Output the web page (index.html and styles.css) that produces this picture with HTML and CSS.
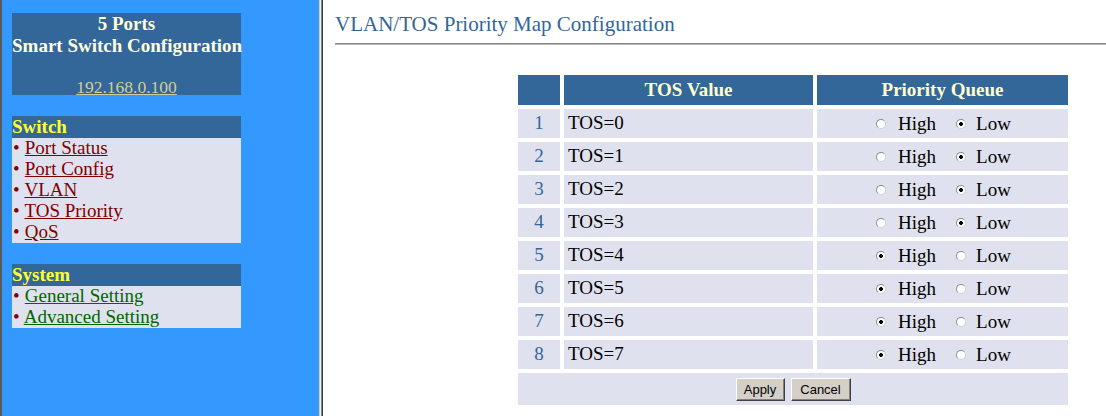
FILE: index.html
```html
<!DOCTYPE html>
<html>
<head>
<meta charset="utf-8">
<title>VLAN/TOS Priority Map Configuration</title>
<link rel="stylesheet" href="styles.css">
</head>
<body>
<div class="page">
  <div class="menu-frame">
    <div class="brand">
      <div class="brand-line">5 Ports</div>
      <div class="brand-line">Smart Switch Configuration</div>
      <div class="brand-ip"><a href="#">192.168.0.100</a></div>
    </div>
    <div class="section">
      <div class="section-title">Switch</div>
      <ul class="section-list red">
        <li><span class="dot">•</span> <a href="#">Port Status</a></li>
        <li><span class="dot">•</span> <a href="#">Port Config</a></li>
        <li><span class="dot">•</span> <a href="#">VLAN</a></li>
        <li><span class="dot">•</span> <a href="#">TOS Priority</a></li>
        <li><span class="dot">•</span> <a href="#">QoS</a></li>
      </ul>
    </div>
    <div class="section">
      <div class="section-title">System</div>
      <ul class="section-list green">
        <li><span class="dot">•</span> <a href="#">General Setting</a></li>
        <li><span class="dot">•</span> <a href="#">Advanced Setting</a></li>
      </ul>
    </div>
  </div>
  <div class="frame-sep"></div>
  <div class="main-frame">
    <h1 class="title">VLAN/TOS Priority Map Configuration</h1>
    <div class="rule"></div>
    <form class="tos-form">
      <table class="tos-table">
        <thead>
          <tr>
            <th class="c-num"></th>
            <th class="c-val">TOS Value</th>
            <th class="c-pri">Priority Queue</th>
          </tr>
        </thead>
        <tbody>
          <tr><td class="num">1</td><td class="val">TOS=0</td><td class="pri"><span class="opts"><input type="radio" name="t0"><span class="lbl-h">High</span><input type="radio" name="t0" checked><span class="lbl-l">Low</span></span></td></tr>
          <tr><td class="num">2</td><td class="val">TOS=1</td><td class="pri"><span class="opts"><input type="radio" name="t1"><span class="lbl-h">High</span><input type="radio" name="t1" checked><span class="lbl-l">Low</span></span></td></tr>
          <tr><td class="num">3</td><td class="val">TOS=2</td><td class="pri"><span class="opts"><input type="radio" name="t2"><span class="lbl-h">High</span><input type="radio" name="t2" checked><span class="lbl-l">Low</span></span></td></tr>
          <tr><td class="num">4</td><td class="val">TOS=3</td><td class="pri"><span class="opts"><input type="radio" name="t3"><span class="lbl-h">High</span><input type="radio" name="t3" checked><span class="lbl-l">Low</span></span></td></tr>
          <tr><td class="num">5</td><td class="val">TOS=4</td><td class="pri"><span class="opts"><input type="radio" name="t4" checked><span class="lbl-h">High</span><input type="radio" name="t4"><span class="lbl-l">Low</span></span></td></tr>
          <tr><td class="num">6</td><td class="val">TOS=5</td><td class="pri"><span class="opts"><input type="radio" name="t5" checked><span class="lbl-h">High</span><input type="radio" name="t5"><span class="lbl-l">Low</span></span></td></tr>
          <tr><td class="num">7</td><td class="val">TOS=6</td><td class="pri"><span class="opts"><input type="radio" name="t6" checked><span class="lbl-h">High</span><input type="radio" name="t6"><span class="lbl-l">Low</span></span></td></tr>
          <tr><td class="num">8</td><td class="val">TOS=7</td><td class="pri"><span class="opts"><input type="radio" name="t7" checked><span class="lbl-h">High</span><input type="radio" name="t7"><span class="lbl-l">Low</span></span></td></tr>
          <tr><td class="actions" colspan="3"><button type="button" class="btn btn-apply">Apply</button><button type="button" class="btn btn-cancel">Cancel</button></td></tr>
        </tbody>
      </table>
    </form>
  </div>
</div>
</body>
</html>
```
FILE: styles.css
```css
html, body {
  margin: 0;
  padding: 0;
  background: #ffffff;
}
body {
  font-family: "Liberation Serif", "Times New Roman", serif;
  font-size: 19px;
  overflow: hidden;
}
.page {
  display: flex;
  height: 416px;
}

/* left frame */
.menu-frame {
  width: 307px;
  flex: none;
  background: #3399ff;
  border-left: 2px solid #5a5a5a;
  padding: 13px 0 0 10px;
  box-sizing: content-box;
}
.brand {
  width: 229px;
  height: 82px;
  box-sizing: border-box;
  background: #336699;
  text-align: center;
  font-weight: bold;
  color: #ffffdd;
}
.brand-line {
  line-height: 21px;
  white-space: nowrap;
}
.brand-line + .brand-line {
  margin-top: 1px;
}
.brand-ip {
  margin-top: 21px;
  line-height: 20px;
  font-weight: normal;
  font-size: 17.5px;
}
.brand-ip a {
  color: #d4cd9b;
  text-decoration: underline;
}
.section {
  width: 229px;
  margin-top: 21px;
}
.section-title {
  background: #336699;
  color: #ffff33;
  font-weight: bold;
  height: 22px;
  line-height: 22px;
}
.section-list {
  list-style: none;
  margin: 0;
  padding: 0;
  background: #dfe2ee;
}
.section-list li {
  height: 21px;
  line-height: 20px;
  white-space: nowrap;
}
.dot {
  color: #800000;
  display: inline-block;
  width: 7px;
  padding-left: 1px;
}
.section-list.red a {
  color: #800000;
  text-decoration: underline;
}
.section-list.green a {
  color: #006600;
  text-decoration: underline;
}

/* frame separator */
.frame-sep {
  width: 4px;
  flex: none;
  background: linear-gradient(to right, #d4d0c8 0 1px, #f4f4f4 1px 2px, #808080 2px 3px, #3c3c3c 3px 4px);
}

/* right frame */
.main-frame {
  flex: 1;
  padding-left: 12px;
  min-width: 0;
}
.title {
  margin: 12px 0 0 0;
  font-size: 21px;
  font-weight: normal;
  line-height: 24px;
  color: #336699;
  white-space: nowrap;
}
.rule {
  margin-top: 7px;
  height: 0;
  border-top: 1px solid #888888;
  border-bottom: 1px solid #b8b8b8;
}
.tos-form {
  margin: 26px 0 0 179px;
}
.tos-table {
  border-collapse: separate;
  border-spacing: 4px;
}
.tos-table th {
  background: #336699;
  color: #ffffcc;
  font-weight: bold;
  height: 30px;
  padding: 0;
  text-align: center;
}
.c-num { width: 42px; }
.c-val { width: 249px; }
.c-pri { width: 251px; }
.tos-table td {
  background: #dfe2ee;
  height: 29px;
  padding: 0 0 1px 0;
  box-sizing: border-box;
  color: #000;
}
.tos-table td.num {
  text-align: center;
  color: #336699;
}
.tos-table td.val {
  padding-left: 4px;
}
.tos-table td.pri {
  text-align: center;
}
.opts {
  display: inline-flex;
  align-items: center;
  vertical-align: middle;
  margin-left: 2px;
}
.opts input[type="radio"] {
  appearance: none;
  -webkit-appearance: none;
  width: 10px;
  height: 10px;
  margin: 1px 0 0 0;
  border-radius: 50%;
  border: 1px solid #8c8c8c;
  border-bottom-color: #d0d0d0;
  border-right-color: #d0d0d0;
  background: #ffffff;
  box-sizing: border-box;
}
.opts input[type="radio"]:checked {
  background: radial-gradient(circle, #000 0 1.7px, #ffffff 2.2px);
}
.lbl-h {
  margin-left: 12px;
  margin-right: 20px;
}
.lbl-l {
  margin-left: 10px;
}
.tos-table td.actions {
  height: 32px;
  padding: 0;
  text-align: center;
}
.btn {
  font-family: "Liberation Sans", Arial, sans-serif;
  font-size: 13px;
  height: 23px;
  padding: 0;
  background: #d4d0c8;
  color: #000;
  border: 1px solid;
  border-color: #ffffff #404040 #404040 #ffffff;
  box-shadow: inset -1px -1px 0 #808080;
  vertical-align: middle;
  margin: 1px 3px 0 3px;
}
.btn-apply { width: 49px; }
.btn-cancel { width: 60px; }
```
